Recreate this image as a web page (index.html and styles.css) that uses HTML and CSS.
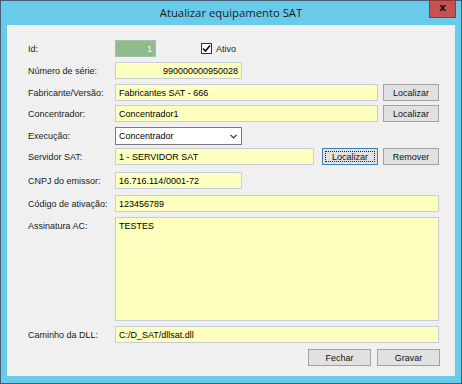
FILE: index.html
```html
<!DOCTYPE html>
<html lang="pt">
<head>
<meta charset="utf-8">
<link rel="stylesheet" href="styles.css">
</head>
<body>
<div class="window">
  <div class="titlebar">
    <span></span>
    <span class="title">Atualizar equipamento SAT</span>
    <span class="close">x</span>
  </div>
  <div class="content">
    <div class="row">
      <span class="label">Id:</span>
      <span class="field id">1</span>
      <span class="check"><svg width="9" height="9" viewBox="0 0 9 9"><path d="M1 4.5 L3.5 7 L8 1.5" fill="none" stroke="#111" stroke-width="1.6"/></svg></span>
      <span class="checklabel">Ativo</span>
    </div>
    <div class="row g5">
      <span class="label">Número de série:</span>
      <span class="field w127 right">990000000950028</span>
    </div>
    <div class="row g5">
      <span class="label">Fabricante/Versão:</span>
      <span class="field w263">Fabricantes SAT - 666</span>
      <span class="btn">Localizar</span>
    </div>
    <div class="row g4">
      <span class="label">Concentrador:</span>
      <span class="field w263">Concentrador1</span>
      <span class="btn">Localizar</span>
    </div>
    <div class="row g5 tall">
      <span class="label">Execução:</span>
      <span class="combo">Concentrador<svg class="chev" width="7" height="5" viewBox="0 0 7 5"><path d="M0.5 0.8 L3.5 3.8 L6.5 0.8" fill="none" stroke="#333" stroke-width="1.2"/></svg></span>
    </div>
    <div class="row g3">
      <span class="label">Servidor SAT:</span>
      <span class="field w199">1 - SERVIDOR SAT</span>
      <span class="btn focus first"><span class="focusring">Localizar</span></span>
      <span class="btn">Remover</span>
    </div>
    <div class="row g7">
      <span class="label">CNPJ do emissor:</span>
      <span class="field w127">16.716.114/0001-72</span>
    </div>
    <div class="row g6">
      <span class="label">Código de ativação:</span>
      <span class="field w324">123456789</span>
    </div>
    <div class="row g5 area">
      <span class="label">Assinatura AC:</span>
      <span class="field w324 multiline">TESTES</span>
    </div>
    <div class="row g5">
      <span class="label">Caminho da DLL:</span>
      <span class="field w324">C:/D_SAT/dllsat.dll</span>
    </div>
    <div class="footer">
      <span class="btn wide">Fechar</span>
      <span class="btn wide">Gravar</span>
    </div>
  </div>
</div>
</body>
</html>
```
FILE: styles.css
```css
* { box-sizing: border-box; }
html, body { margin: 0; padding: 0; background: #ffffff; }
.window {
  width: 462px;
  height: 384px;
  border: 1px solid #475f73;
  background: #69cbea;
  padding: 0 6px 7px 6px;
  display: flex;
  flex-direction: column;
  font-family: "Liberation Sans", Arial, sans-serif;
}
.titlebar {
  height: 24px;
  flex: none;
  display: grid;
  grid-template-columns: 1fr auto 1fr;
  align-items: start;
}
.title {
  font-family: "Open Sans", "Noto Sans", sans-serif;
  font-size: 11.3px;
  color: #1c1c1c;
  line-height: 1;
  margin-top: 6px;
}
.close {
  justify-self: end;
  width: 27px;
  height: 18px;
  margin-top: -1px;
  margin-right: -1px;
  background: #c75050;
  border: 1px solid #8e3b36;
  color: #111;
  font-family: "DejaVu Sans", sans-serif;
  font-weight: bold;
  font-size: 11px;
  line-height: 14px;
  text-align: center;
}
.content {
  flex: 1;
  background: #f0f0f0;
  padding: 15px 0 0 21px;
  display: flex;
  flex-direction: column;
  font-size: 9px;
  color: #1a1a1a;
}
.row {
  display: flex;
  align-items: center;
  height: 17px;
}
.row.tall { height: 18px; }
.row.area { height: 104px; align-items: flex-start; }
.row.area .label { margin-top: 4px; }
.g3 { margin-top: 3px; }
.g4 { margin-top: 4px; }
.g5 { margin-top: 5px; }
.g6 { margin-top: 6px; }
.g7 { margin-top: 7px; }
.label {
  width: 87px;
  flex: none;
  white-space: nowrap;
}
.field {
  height: 100%;
  background: #ffffc0;
  border: 1px solid #c4ced8;
  padding: 0 3px;
  display: flex;
  align-items: center;
  color: #000;
  white-space: nowrap;
  flex: none;
}
.field.right { justify-content: flex-end; }
.field.id {
  width: 41px;
  background: #8fbc8f;
  border-color: #a8bfa8;
  color: #f4f4f4;
  justify-content: flex-end;
}
.field.multiline { align-items: flex-start; padding-top: 3px; }
.w127 { width: 127px; }
.w199 { width: 199px; }
.w263 { width: 263px; }
.w324 { width: 324px; }
.check {
  width: 11px;
  height: 11px;
  margin-left: 45px;
  border: 1px solid #333;
  background: #fff;
  display: flex;
  align-items: center;
  justify-content: center;
}
.checklabel { margin-left: 4px; }
.combo {
  width: 127px;
  height: 18px;
  background: #fff;
  border: 1px solid #7a7a7a;
  display: flex;
  align-items: center;
  justify-content: space-between;
  padding: 0 4px 0 3px;
  color: #000;
}
.btn {
  width: 56px;
  height: 17px;
  margin-left: 5px;
  background: #e1e1e1;
  border: 1px solid #a3a3a3;
  display: flex;
  align-items: center;
  justify-content: center;
  color: #111;
  flex: none;
}
.btn.first { margin-left: 8px; }
.btn.focus { border-color: #3c7fb1; padding: 2px; }
.focusring {
  width: 100%;
  height: 100%;
  border: 1px dotted #222;
  display: flex;
  align-items: center;
  justify-content: center;
}
.footer {
  margin-top: 6px;
  display: flex;
  justify-content: flex-end;
  padding-right: 15px;
  gap: 6px;
}
.btn.wide { width: 63px; margin-left: 0; }
```
